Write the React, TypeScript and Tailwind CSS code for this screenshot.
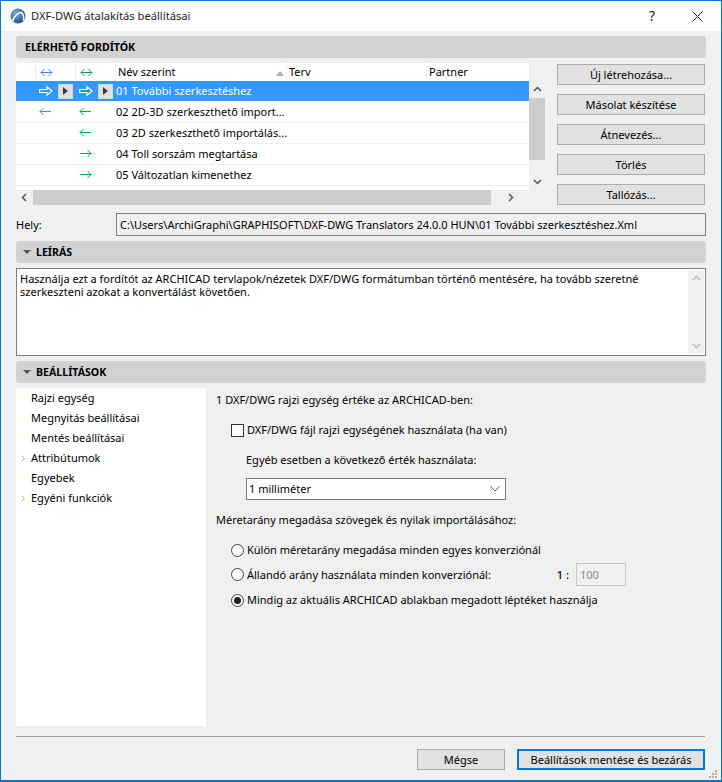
import React from 'react';

const FONT = "font-['Noto_Sans','Open_Sans',sans-serif]";
const BLUE = '#3b8af0';
const GREEN = '#00a84f';

const Arrow = ({ kind, color, hollow }: { kind: 'both' | 'left' | 'right'; color: string; hollow?: boolean }) => {
  if (hollow) {
    return (
      <svg width="14" height="10" viewBox="0 0 14 10" className="shrink-0">
        <path d="M0.5 3.5H8V0.8L13 5L8 9.2V6.5H0.5Z" fill="none" stroke="#fff" strokeWidth="1.2" />
        <path d="M2 5H11" stroke={color} strokeWidth="1.4" />
      </svg>
    );
  }
  return (
    <svg width="13" height="10" viewBox="0 0 13 10" fill="none" stroke={color} strokeWidth="1" className="shrink-0">
      <path d="M1 4.5H12" />
      {kind !== 'right' && <path d="M4.5 1L1 4.5L4.5 8" />}
      {kind !== 'left' && <path d="M8.5 1L12 4.5L8.5 8" />}
    </svg>
  );
};

const PlayBtn = () => (
  <div className="w-[15px] h-[15px] border border-[#d8d8d8] bg-[#e1e1e1] flex items-center justify-center shrink-0">
    <div className="w-0 h-0 border-y-[4px] border-y-transparent border-l-[5px] border-l-[#3c3c3c]" />
  </div>
);

const Chevron = ({ d, color = '#555' }: { d: string; color?: string }) => (
  <svg width="9" height="9" viewBox="0 0 9 9" fill="none" stroke={color} strokeWidth="1.5">
    <path d={d} />
  </svg>
);

const UP = 'M1 6L4.5 2.5L8 6';
const DOWN = 'M1 3L4.5 6.5L8 3';

const SectionHead = ({ title, caret }: { title: string; caret?: boolean }) => (
  <div className="h-[22px] bg-[#d2d2d2] rounded-[3px] flex items-center text-[10.6px] font-bold text-black">
    {caret ? (
      <>
        <div className="ml-[7px] mr-[5px] w-0 h-0 border-x-[4px] border-x-transparent border-t-[4px] border-t-[#555]" />
        <span>{title}</span>
      </>
    ) : (
      <span className="ml-[9px]">{title}</span>
    )}
  </div>
);

const SideBtn = ({ label }: { label: string }) => (
  <div className="h-[21px] border border-[#adadad] bg-[#e1e1e1] flex items-center justify-center text-black">
    {label}
  </div>
);

const Radio = ({ on }: { on?: boolean }) => (
  <div className="w-[13px] h-[13px] rounded-full border border-[#444] bg-white flex items-center justify-center shrink-0">
    {on && <div className="w-[7px] h-[7px] rounded-full bg-[#222]" />}
  </div>
);

const rows = [
  { name: '01 További szerkesztéshez', selected: true },
  { name: '02 2D-3D szerkeszthető import...', blue: 'left', green: 'left' },
  { name: '03 2D szerkeszthető importálás...', green: 'left' },
  { name: '04 Toll sorszám megtartása', green: 'right' },
  { name: '05 Változatlan kimenethez', green: 'right' },
] as const;

const App = () => {
  return (
    <div className={`${FONT} w-[722px] h-[782px] bg-[#f0f0f0] border border-[#0078d7] border-b-2 flex flex-col text-[11px] leading-[16px] text-black overflow-hidden relative`}>
      {/* title bar */}
      <div className="h-[30px] bg-white flex items-center shrink-0">
        <svg width="16" height="16" viewBox="0 0 16 16" className="ml-[9px]">
          <defs>
            <radialGradient id="logo" cx="0.35" cy="0.3" r="0.8">
              <stop offset="0" stopColor="#7aa7dc" />
              <stop offset="1" stopColor="#1d4a8c" />
            </radialGradient>
          </defs>
          <circle cx="8" cy="8" r="7.5" fill="url(#logo)" />
          <path d="M2.5 13.5C4 8 8 4.5 11.5 4.5C13.5 6.5 14 9.5 13.5 12.5" fill="none" stroke="#fff" strokeWidth="1.5" />
        </svg>
        <span className="ml-[5px] text-[11.2px] text-[#222]">DXF-DWG átalakítás beállításai</span>
        <span className="ml-auto text-[14px] text-[#222] mr-[37px]">?</span>
        <svg width="11" height="11" viewBox="0 0 11 11" className="mr-[18px]" fill="none" stroke="#222" strokeWidth="1">
          <path d="M0.5 0.5L10.5 10.5M10.5 0.5L0.5 10.5" />
        </svg>
      </div>

      <div className="pl-[15px] pr-[15px] pt-[5px] flex flex-col flex-1">
        <SectionHead title="ELÉRHETŐ FORDÍTÓK" />

        {/* translators list + buttons */}
        <div className="flex mt-[5px]">
          <div className="w-[529px] shrink-0 flex flex-col">
            <div className="flex">
              <div className="w-[513px] bg-white">
                <div className="h-[18px] flex items-center">
                  <div className="w-[19px] h-full" />
                  <div className="w-[40px] h-full border-l border-[#f0f0f0] pl-[4px] pt-[2px] flex items-center">
                    <Arrow kind="both" color={BLUE} />
                  </div>
                  <div className="w-[40px] h-full border-l border-[#f0f0f0] pl-[4px] pt-[2px] flex items-center">
                    <Arrow kind="both" color={GREEN} />
                  </div>
                  <div className="w-[171px] h-full border-l border-[#f0f0f0] pl-[2px] flex items-center relative">
                    Név szerint
                    <div className="absolute right-[2px] top-[8px] w-0 h-0 border-x-[4px] border-x-transparent border-b-[5px] border-b-[#aaa]" />
                  </div>
                  <div className="w-[140px] h-full border-l border-[#f0f0f0] pl-[2px] flex items-center">Terv</div>
                  <div className="flex-1 h-full border-l border-[#f0f0f0] pl-[2px] flex items-center">Partner</div>
                </div>
                {rows.map((r, i) => {
                  const sel = 'selected' in r;
                  return (
                    <div
                      key={r.name}
                      className={
                        sel
                          ? 'h-[20px] flex items-center bg-[#3399ff] text-white'
                          : i === 1
                            ? 'h-[22px] pt-[1px] flex items-center border-b border-[#f0f0f0]'
                            : 'h-[21px] flex items-center border-b border-[#f0f0f0]'
                      }
                    >
                      <div className="w-[23px] shrink-0" />
                      <div className="w-[40px] shrink-0 flex items-center gap-[5px]">
                        {sel ? (
                          <>
                            <Arrow kind="right" color="#3399ff" hollow />
                            <PlayBtn />
                          </>
                        ) : 'blue' in r ? (
                          <Arrow kind="left" color={BLUE} />
                        ) : null}
                      </div>
                      <div className="w-[36px] shrink-0 flex items-center gap-[5px]">
                        {sel ? (
                          <>
                            <Arrow kind="right" color={GREEN} hollow />
                            <PlayBtn />
                          </>
                        ) : (
                          <Arrow kind={(r as { green: 'left' | 'right' }).green} color={GREEN} />
                        )}
                      </div>
                      <span className="ml-[1px] whitespace-nowrap">{r.name}</span>
                    </div>
                  );
                })}
                <div className="h-[4px]" />
              </div>
              {/* vertical scrollbar */}
              <div className="w-[16px] mt-[18px] flex flex-col items-center bg-[#f0f0f0]">
                <div className="h-[17px] flex items-center"><Chevron d={UP} /></div>
                <div className="w-full h-[62px] bg-[#cdcdcd]" />
                <div className="flex-1 flex items-end pb-[4px]"><Chevron d={DOWN} /></div>
              </div>
            </div>
            {/* horizontal scrollbar */}
            <div className="h-[15px] w-[513px] flex items-center">
              <div className="w-[17px] flex justify-center"><Chevron d="M6 1L2.5 4.5L6 8" /></div>
              <div className="w-[458px] h-full bg-[#cdcdcd]" />
              <div className="flex-1 flex justify-center"><Chevron d="M3 1L6.5 4.5L3 8" /></div>
            </div>
          </div>
          <div className="ml-[12px] w-[148px] pt-[1px] flex flex-col gap-[9px]">
            <SideBtn label="Új létrehozása..." />
            <SideBtn label="Másolat készítése" />
            <SideBtn label="Átnevezés..." />
            <SideBtn label="Törlés" />
            <SideBtn label="Tallózás..." />
          </div>
        </div>

        {/* location */}
        <div className="flex items-center mt-[8px]">
          <span className="w-[100px]">Hely:</span>
          <div className="flex-1 h-[23px] border border-[#808080] bg-[#f0f0f0] flex items-center pl-[3px] whitespace-nowrap overflow-hidden">
            C:\Users\ArchiGraphi\GRAPHISOFT\DXF-DWG Translators 24.0.0 HUN\01 További szerkesztéshez.Xml
          </div>
        </div>

        <div className="mt-[5px]">
          <SectionHead title="LEÍRÁS" caret />
        </div>

        {/* description */}
        <div className="mt-[5px] h-[88px] border border-[#808080] bg-white flex">
          <div className="flex-1 pl-[3px] pt-[3px] leading-[13px]">
            Használja ezt a fordítót az ARCHICAD tervlapok/nézetek DXF/DWG formátumban történő mentésére, ha tovább szeretné<br />
            szerkeszteni azokat a konvertálást követően.
          </div>
          <div className="w-[16px] my-[1px] mr-[1px] bg-[#f0f0f0] flex flex-col items-center justify-between py-[4px]">
            <Chevron d={UP} color="#c0c0c0" />
            <Chevron d={DOWN} color="#c0c0c0" />
          </div>
        </div>

        <div className="mt-[5px]">
          <SectionHead title="BEÁLLÍTÁSOK" caret />
        </div>

        {/* settings */}
        <div className="flex mt-[5px] h-[338px]">
          <div className="w-[190px] bg-white shrink-0">
            {['Rajzi egység', 'Megnyitás beállításai', 'Mentés beállításai', 'Attribútumok', 'Egyebek', 'Egyéni funkciók'].map((t) => (
              <div key={t} className="h-[20px] flex items-center relative pl-[15px]">
                {(t === 'Attribútumok' || t === 'Egyéni funkciók') && (
                  <svg width="5" height="7" viewBox="0 0 5 7" className="absolute left-[5px] top-[7px]" fill="none" stroke="#aaa">
                    <path d="M1 1L3.5 3.5L1 6" />
                  </svg>
                )}
                {t}
              </div>
            ))}
          </div>
          <div className="pl-[10px] pt-[4px] flex-1 flex flex-col">
            <div className="h-[16px]">1 DXF/DWG rajzi egység értéke az ARCHICAD-ben:</div>
            <div className="flex items-center mt-[14px] ml-[15px] gap-[3px]">
              <div className="w-[13px] h-[13px] border border-[#333] bg-white" />
              <span>DXF/DWG fájl rajzi egységének használata (ha van)</span>
            </div>
            <div className="mt-[14px] ml-[30px]">Egyéb esetben a következő érték használata:</div>
            <div className="mt-[10px] ml-[30px] w-[260px] h-[22px] border border-[#7a7a7a] bg-white flex items-center pl-[2px] pr-[5px] justify-between">
              <span>1 milliméter</span>
              <svg width="10" height="6" viewBox="0 0 10 6" fill="none" stroke="#555"><path d="M0.5 0.5L5 5L9.5 0.5" /></svg>
            </div>
            <div className="mt-[12px]">Méretarány megadása szövegek és nyilak importálásához:</div>
            <div className="mt-[14px] ml-[15px] flex items-center gap-[3px]">
              <Radio />
              <span>Külön méretarány megadása minden egyes konverziónál</span>
            </div>
            <div className="mt-[5px] ml-[15px] flex items-center gap-[3px] h-[23px]">
              <Radio />
              <span>Állandó arány használata minden konverziónál:</span>
              <span className="ml-auto mr-[4px] font-medium">1 :</span>
              <div className="w-[50px] h-[23px] border border-[#c8c8c8] bg-[#f0f0f0] text-[#8a8a8a] flex items-center pl-[3px] mr-[80px]">100</div>
            </div>
            <div className="mt-[6px] ml-[15px] flex items-center gap-[3px]">
              <Radio on />
              <span>Mindig az aktuális ARCHICAD ablakban megadott léptéket használja</span>
            </div>
          </div>
        </div>

        <div className="mt-[10px] mr-[1px] h-px bg-[#a0a0a0]" />

        {/* footer */}
        <div className="mt-[12px] mr-[1px] flex justify-end gap-[12px]">
          <div className="w-[88px] h-[21px] border border-[#adadad] bg-[#e1e1e1] flex items-center justify-center">Mégse</div>
          <div className="w-[188px] h-[21px] border-2 border-[#0078d7] bg-[#e1e1e1] flex items-center justify-center">Beállítások mentése és bezárás</div>
        </div>
      </div>

      {/* resize grip */}
      <svg width="10" height="10" viewBox="0 0 10 10" className="absolute right-[3px] bottom-[1px]" fill="#b0b0b0">
        <rect x="7" y="1" width="2" height="2" />
        <rect x="4" y="4" width="2" height="2" />
        <rect x="7" y="4" width="2" height="2" />
        <rect x="1" y="7" width="2" height="2" />
        <rect x="4" y="7" width="2" height="2" />
        <rect x="7" y="7" width="2" height="2" />
      </svg>
    </div>
  );
};

export default App;
